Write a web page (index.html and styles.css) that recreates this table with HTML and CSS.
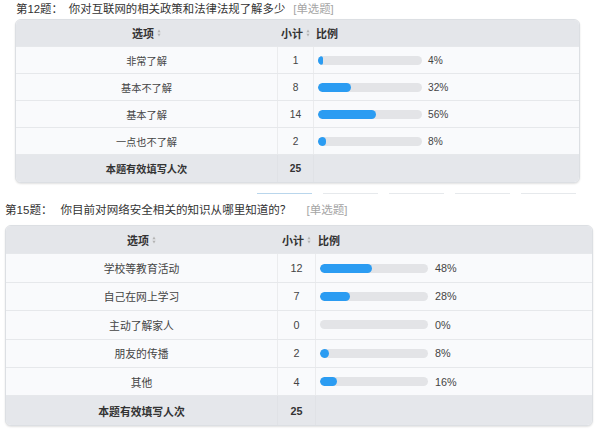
FILE: index.html
```html
<!DOCTYPE html>
<html lang="zh-CN">
<head>
<meta charset="utf-8">
<link rel="stylesheet" href="styles.css">
</head>
<body>
<div class="page">
  <section class="q q1">
    <div class="qtitle"><span class="qno">第12题：</span><span class="qtext">你对互联网的相关政策和法律法规了解多少</span><span class="qtype">[单选题]</span></div>
    <div class="tbl">
      <div class="row head">
        <div class="c opt">选项<svg class="sort" viewBox="0 0 4 8" width="4" height="8"><path d="M2 0.5 L3.6 3.2 H0.4 Z M2 7.5 L3.6 4.8 H0.4 Z"/></svg></div>
        <div class="c cnt">小计<svg class="sort" viewBox="0 0 4 8" width="4" height="8"><path d="M2 0.5 L3.6 3.2 H0.4 Z M2 7.5 L3.6 4.8 H0.4 Z"/></svg></div>
        <div class="c pct">比例</div>
      </div>
      <div class="row"><div class="c opt">非常了解</div><div class="c cnt">1</div><div class="c pct"><div class="bar"><div class="fill" style="width:4%"></div></div><span class="pv">4%</span></div></div>
      <div class="row"><div class="c opt">基本不了解</div><div class="c cnt">8</div><div class="c pct"><div class="bar"><div class="fill" style="width:32%"></div></div><span class="pv">32%</span></div></div>
      <div class="row"><div class="c opt">基本了解</div><div class="c cnt">14</div><div class="c pct"><div class="bar"><div class="fill" style="width:56%"></div></div><span class="pv">56%</span></div></div>
      <div class="row"><div class="c opt">一点也不了解</div><div class="c cnt">2</div><div class="c pct"><div class="bar"><div class="fill" style="width:8%"></div></div><span class="pv">8%</span></div></div>
      <div class="row total"><div class="c opt">本题有效填写人次</div><div class="c cnt">25</div><div class="c pct"></div></div>
    </div>
  </section>

  <div class="pager">
    <span class="pl on"></span><span class="pl"></span><span class="pl"></span><span class="pl"></span><span class="pl"></span>
  </div>

  <section class="q q2">
    <div class="qtitle"><span class="qno">第15题：</span><span class="qtext">你目前对网络安全相关的知识从哪里知道的？</span><span class="qtype">[单选题]</span></div>
    <div class="tbl">
      <div class="row head">
        <div class="c opt">选项<svg class="sort" viewBox="0 0 4 8" width="4" height="8"><path d="M2 0.5 L3.6 3.2 H0.4 Z M2 7.5 L3.6 4.8 H0.4 Z"/></svg></div>
        <div class="c cnt">小计<svg class="sort" viewBox="0 0 4 8" width="4" height="8"><path d="M2 0.5 L3.6 3.2 H0.4 Z M2 7.5 L3.6 4.8 H0.4 Z"/></svg></div>
        <div class="c pct">比例</div>
      </div>
      <div class="row"><div class="c opt">学校等教育活动</div><div class="c cnt">12</div><div class="c pct"><div class="bar"><div class="fill" style="width:48%"></div></div><span class="pv">48%</span></div></div>
      <div class="row"><div class="c opt">自己在网上学习</div><div class="c cnt">7</div><div class="c pct"><div class="bar"><div class="fill" style="width:28%"></div></div><span class="pv">28%</span></div></div>
      <div class="row"><div class="c opt">主动了解家人</div><div class="c cnt">0</div><div class="c pct"><div class="bar"><div class="fill zero" style="width:0%"></div></div><span class="pv">0%</span></div></div>
      <div class="row"><div class="c opt">朋友的传播</div><div class="c cnt">2</div><div class="c pct"><div class="bar"><div class="fill" style="width:8%"></div></div><span class="pv">8%</span></div></div>
      <div class="row"><div class="c opt">其他</div><div class="c cnt">4</div><div class="c pct"><div class="bar"><div class="fill" style="width:16%"></div></div><span class="pv">16%</span></div></div>
      <div class="row total"><div class="c opt">本题有效填写人次</div><div class="c cnt">25</div><div class="c pct"></div></div>
    </div>
  </section>
</div>
</body>
</html>
```

FILE: styles.css
```css
* { box-sizing: border-box; }
html, body { margin: 0; padding: 0; background: #fff; }
body {
  font-family: "Liberation Sans", "Noto Sans CJK SC", sans-serif;
  color: #444;
}
.page { width: 598px; height: 433px; overflow: hidden; }

.qtitle {
  height: 17px;
  line-height: 17px;
  color: #333;
  white-space: nowrap;
  display: flex;
  align-items: center;
}
.qtype { color: #a5a5a5; }

.q1 { padding-left: 15px; }
.q1 .qtitle { margin-left: 1px; height: 19px; font-size: 11.4px; }
.q1 .qno { margin-right: 6px; }
.q1 .qtype { margin-left: 8px; }
.q2 { padding-left: 5px; }
.q2 .qtitle { margin-bottom: 6px; font-size: 11.55px; }
.q2 .qno { margin-right: 8px; }
.q2 .qtype { margin-left: 15px; }

.tbl {
  border-radius: 6px;
  overflow: hidden;
  border: 1px solid #dcdfe3;
  box-shadow: 0 1px 2px rgba(0,0,0,0.12);
  background: #f9fafc;
}
.q1 .tbl { width: 565px; --rh: 27px; --c1: 262px; --c2: 36px; --bw: 104px; --fs: 10.2px; --pad: 4px; --gap: 6px; }
.q2 .tbl { width: 588px; --rh: 28.4px; --c1: 272px; --c2: 38px; --bw: 108px; --fs: 10.8px; --pad: 4px; --gap: 7px; }

.row {
  display: flex;
  height: var(--rh);
  border-bottom: 1px solid #e6e8eb;
  font-size: var(--fs);
}
.row:last-child { border-bottom: 0; }
.c {
  display: flex;
  align-items: center;
  justify-content: center;
  border-right: 1px solid #ebecee;
}
.c.opt { width: var(--c1); }
.c.cnt { width: var(--c2); }
.c.pct { flex: 1; justify-content: flex-start; padding-left: var(--pad); border-right: 0; }

.head { background: #e4e6ea; font-weight: bold; color: #333; font-size: 11px; }
.head .c { border-right-color: #e4e6ea; }
.head .c.pct { padding-left: 2px; }
.total { background: #e5e7eb; font-weight: bold; color: #333; }
.total .c { border-right-color: #e0e2e6; }

.sort { fill: #b4b4b4; margin-left: 3px; }

.bar {
  width: var(--bw);
  height: 9px;
  border-radius: 5px;
  background: #e3e4e7;
  overflow: hidden;
  flex: none;
}
.fill {
  height: 100%;
  min-width: 5px;
  border-radius: 5px;
  background: #2b9cf2;
}
.fill.zero { min-width: 0; }
.pv { margin-left: var(--gap); color: #444; }

.pager {
  display: flex;
  gap: 11px;
  margin: 10px 0 8px 257px;
  height: 1px;
}
.pl { width: 55px; height: 1px; background: #e6e9ec; }
.pl.on { background: #b9d6ec; }
```
